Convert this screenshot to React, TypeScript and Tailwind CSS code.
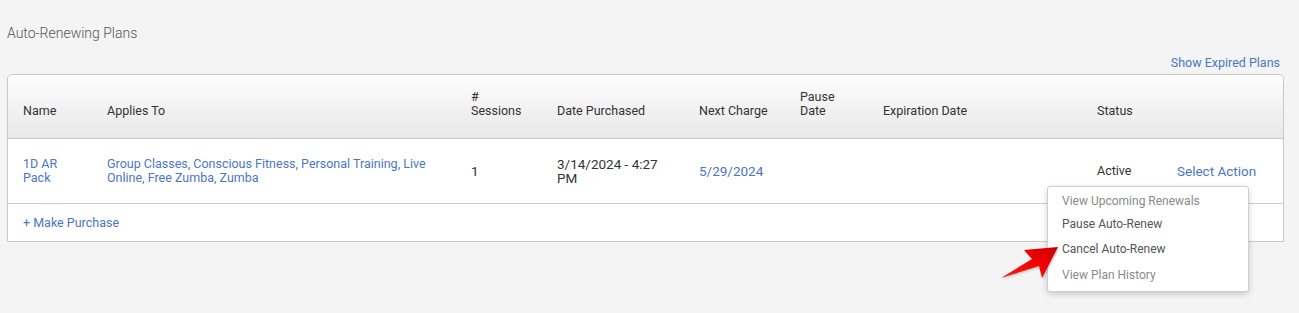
import React from "react";

const COLS =
  "grid grid-cols-[84px_364px_86px_142px_101px_83px_214px_80px_1fr] pl-[15px]";

const menuItems = [
  { label: "View Upcoming Renewals", h: "h-[23px]", c: "text-[#8a8a8a]" },
  { label: "Pause Auto-Renew", h: "h-[23px]", c: "text-[#555]" },
  { label: "Cancel Auto-Renew", h: "h-[27px]", c: "text-[#555]" },
  { label: "View Plan History", h: "h-[26px]", c: "text-[#8a8a8a]" },
];

function RedArrow() {
  return (
    <svg
      width="70"
      height="50"
      viewBox="0 0 70 50"
      className="absolute left-[995px] top-[235px]"
    >
      <defs>
        <linearGradient id="arr" x1="0" y1="1" x2="1" y2="0">
          <stop offset="0" stopColor="#ff1a1a" />
          <stop offset="0.6" stopColor="#f00000" />
          <stop offset="1" stopColor="#c80000" />
        </linearGradient>
      </defs>
      <path
        d="M63 12 L29 15 L37 24 L6 43 L44 31 L47 43 Z"
        fill="url(#arr)"
        style={{ filter: "drop-shadow(1px 1px 1px rgba(0,0,0,0.25))" }}
      />
    </svg>
  );
}

export default function App() {
  return (
    <div
      className="relative h-[313px] w-full bg-[#f4f4f4] pl-[7px] pr-[15px] text-[#333]"
      style={{ fontFamily: "Roboto, 'Liberation Sans', sans-serif" }}
    >
      <div className="pt-[25px] text-[14px] leading-[16px] font-light text-[#555]">
        Auto-Renewing Plans
      </div>
      <div className="mt-[14px] pr-[4px] text-right text-[12.5px] leading-[16px] text-[#4a77c4]">
        Show Expired Plans
      </div>

      <div className="mt-[3px] rounded-t-[5px] border border-[#c9c9c9] bg-white text-[12.5px] leading-[14px]">
        {/* header */}
        <div
          className={`${COLS} h-[64px] items-end rounded-t-[5px] border-b border-[#c9c9c9] bg-gradient-to-b from-[#fdfdfd] to-[#e8e8e8] pb-[20px] text-[#333]`}
        >
          <div>Name</div>
          <div>Applies To</div>
          <div className="w-[60px]">#<br />Sessions</div>
          <div>Date Purchased</div>
          <div>Next Charge</div>
          <div className="w-[40px]">Pause Date</div>
          <div>Expiration Date</div>
          <div>Status</div>
          <div />
        </div>

        {/* plan row */}
        <div className={`${COLS} h-[65px] items-center border-b border-[#c9c9c9]`}>
          <div className="w-[50px] text-[#4a77c4]">1D AR Pack</div>
          <div className="w-[340px] text-[#4a77c4]">
            Group Classes, Conscious Fitness, Personal Training, Live Online,
            Free Zumba, Zumba
          </div>
          <div className="text-[13.5px]">1</div>
          <div className="w-[115px] text-[13.5px]">3/14/2024 - 4:27 PM</div>
          <div className="text-[13.5px] text-[#4a77c4]">5/29/2024</div>
          <div />
          <div />
          <div>Active</div>
          <div className="text-[13.5px] text-[#4a77c4]">Select Action</div>
        </div>

        {/* footer */}
        <div className="flex h-[37px] items-center pl-[15px] text-[#4a77c4]">
          + Make Purchase
        </div>
      </div>

      {/* dropdown menu */}
      <div className="absolute left-[1047px] top-[186px] w-[202px] rounded-[3px] border border-[#cfcfcf] bg-white pb-[3px] pt-[2px] text-[12px] shadow-[0_2px_6px_rgba(0,0,0,0.18)]">
        {menuItems.map((m) => (
          <div key={m.label} className={`flex ${m.h} items-center pl-[14px] ${m.c}`}>
            {m.label}
          </div>
        ))}
      </div>

      <RedArrow />
    </div>
  );
}
